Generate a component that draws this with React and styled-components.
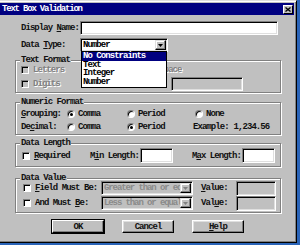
import styled, { createGlobalStyle } from "styled-components";

const GlobalStyle = createGlobalStyle`
  html, body {
    margin: 0;
    padding: 0;
    background: #2a64b8;
  }
  body {
    width: 300px;
    height: 245px;
    overflow: hidden;
  }
  * {
    box-sizing: border-box;
  }
`;

const Window = styled.div`
  width: 300px;
  height: 243px;
  margin-left: -3px;
  padding: 2px;
  background: #c0c0c0;
  border: 1px solid;
  border-color: #dfdfdf #000 #000 #dfdfdf;
  box-shadow: inset 1px 1px 0 #fff, inset -1px -1px 0 #808080;
  font-family: "Liberation Mono", "DejaVu Sans Mono", monospace;
  font-size: 9px;
  font-weight: bold;
  line-height: 10px;
  letter-spacing: -0.95px;
  color: #111;
  display: flex;
  flex-direction: column;
`;

const TitleBar = styled.div`
  height: 12px;
  flex: none;
  background: #000080;
  color: #fff;
  letter-spacing: -1.2px;
  display: flex;
  align-items: center;
  justify-content: space-between;
  padding: 0 1px 0 2px;
`;

const CloseButton = styled.div`
  width: 10px;
  height: 9px;
  background: #c0c0c0;
  border: 1px solid;
  border-color: #fff #000 #000 #fff;
  display: flex;
  align-items: center;
  justify-content: center;
`;

const Body = styled.div`
  display: flex;
  flex-direction: column;
  padding: 6px 13px 0 15px;
`;

const FieldRow = styled.div`
  display: flex;
  align-items: center;
  height: 14px;
  padding-left: 6px;
  margin-top: ${(p) => p.$mt || 0}px;
`;

const FieldLabel = styled.span`
  width: 59px;
  flex: none;
`;

const Sunken = styled.div`
  width: ${(p) => p.$w}px;
  height: ${(p) => p.$h || 14}px;
  flex: none;
  background: ${(p) => (p.$disabled ? "#c0c0c0" : "#fff")};
  border: 1px solid;
  border-color: #808080 #fff #fff #808080;
  box-shadow: inset 1px 1px 0 #000, inset -1px -1px 0 #dfdfdf;
  margin-left: ${(p) => p.$ml || 0}px;
`;

const Select = styled(Sunken)`
  position: relative;
  display: flex;
  align-items: center;
  padding: 2px 1px 2px 2px;
  color: ${(p) => (p.$disabled ? "#8a8a8a" : "#000")};
  white-space: nowrap;
`;

const SelectText = styled.span`
  flex: 1;
  overflow: hidden;
  letter-spacing: ${(p) => (p.$tight ? "-1.1px" : "inherit")};
`;

const ArrowButton = styled.span`
  width: 11px;
  height: 10px;
  flex: none;
  background: #c0c0c0;
  border: 1px solid;
  border-color: #dfdfdf #000 #000 #dfdfdf;
  box-shadow: inset -1px -1px 0 #808080, inset 1px 1px 0 #fff;
  display: flex;
  align-items: center;
  justify-content: center;
`;

const DropList = styled.div`
  position: absolute;
  left: 0;
  top: 100%;
  width: 100%;
  height: 37px;
  background: #fff;
  border: 1px solid #000;
  color: #000;
  z-index: 2;
`;

const DropItem = styled.div`
  height: 8.7px;
  line-height: 8.7px;
  padding-left: 1px;
  background: ${(p) => (p.$active ? "#000080" : "transparent")};
  color: ${(p) => (p.$active ? "#fff" : "#000")};
`;

const Group = styled.div`
  position: relative;
  margin-top: ${(p) => p.$mt}px;
  border: 1px solid #808080;
  box-shadow: 1px 1px 0 #fff, inset 1px 1px 0 #fff;
  padding: ${(p) => p.$pad};
  display: flex;
  flex-direction: column;
  gap: ${(p) => p.$gap || 0}px;
`;

const Legend = styled.span`
  position: absolute;
  top: -6px;
  left: 4px;
  padding: 0 1px;
  background: #c0c0c0;
  line-height: 10px;
`;

const Row = styled.div`
  display: flex;
  align-items: center;
  height: ${(p) => p.$h}px;
`;

const Cell = styled.div`
  display: flex;
  align-items: center;
  width: ${(p) => (p.$w ? `${p.$w}px` : "auto")};
  flex: none;
  gap: ${(p) => (p.$gap === undefined ? 4 : p.$gap)}px;
  margin-left: ${(p) => p.$ml || 0}px;
`;

const Text = styled.span`
  white-space: nowrap;
  color: ${(p) => (p.$disabled ? "#808080" : "inherit")};
  text-shadow: ${(p) => (p.$disabled ? "1px 1px 0 #fff" : "none")};
`;

const Box = styled.span`
  width: 8px;
  height: 8px;
  flex: none;
  background: ${(p) => (p.$disabled ? "#c0c0c0" : "#fff")};
  border: 1px solid;
  border-color: #808080 #fff #fff #808080;
  box-shadow: inset 1px 1px 0 #000;
`;

const Radio = styled.span`
  width: 8px;
  height: 8px;
  flex: none;
  border-radius: 50%;
  background: #fff;
  border: 1px solid;
  border-color: #808080 #fff #fff #808080;
  box-shadow: inset 1px 1px 0 #000;
  display: flex;
  align-items: center;
  justify-content: center;
  &::after {
    content: "";
    width: 3px;
    height: 3px;
    border-radius: 50%;
    background: #000;
    display: ${(p) => (p.$checked ? "block" : "none")};
  }
`;

const ButtonRow = styled.div`
  display: flex;
  gap: 18px;
  margin-top: 7px;
  padding-left: 37px;
`;

const Button = styled.div`
  width: 52px;
  height: 13px;
  background: #c0c0c0;
  border: 1px solid;
  border-color: #fff #000 #000 #fff;
  box-shadow: ${(p) =>
    p.$default
      ? "0 0 0 1px #000, inset -1px -1px 0 #808080"
      : "inset -1px -1px 0 #808080, inset 1px 1px 0 #dfdfdf"};
  display: flex;
  align-items: center;
  justify-content: center;
`;

const U = styled.u`
  text-decoration-thickness: 1px;
  text-underline-offset: 1px;
`;

const Arrow = ({ color = "#000" }) => (
  <svg width="5" height="3" viewBox="0 0 5 3">
    <path d="M0 0h5L2.5 3z" fill={color} />
  </svg>
);

const App = () => {
  return (
    <>
      <GlobalStyle />
      <Window>
        <TitleBar>
          <span>Text Box Validation</span>
          <CloseButton>
            <svg width="6" height="5" viewBox="0 0 6 5">
              <path d="M0.5 0.5l5 4M5.5 0.5l-5 4" stroke="#000" strokeWidth="1.3" />
            </svg>
          </CloseButton>
        </TitleBar>
        <Body>
          <FieldRow>
            <FieldLabel>
              Display <U>N</U>ame:
            </FieldLabel>
            <Sunken $w={198} />
          </FieldRow>
          <FieldRow $mt={3}>
            <FieldLabel>
              Data <U>T</U>ype:
            </FieldLabel>
            <Select $w={88}>
              <SelectText>Number</SelectText>
              <ArrowButton>
                <Arrow />
              </ArrowButton>
              <DropList>
                <DropItem $active>No Constraints</DropItem>
                <DropItem>Text</DropItem>
                <DropItem>Integer</DropItem>
                <DropItem>Number</DropItem>
              </DropList>
            </Select>
          </FieldRow>

          <Group $mt={8} $pad="4px 0 1px 5px" $gap={2}>
            <Legend>Text Format</Legend>
            <Row $h={10}>
              <Cell $w={104}>
                <Box $disabled />
                <Text $disabled>Letters</Text>
              </Cell>
              <Cell>
                <Box $disabled />
                <Text $disabled>Whitespace</Text>
              </Cell>
            </Row>
            <Row $h={14}>
              <Cell $w={104}>
                <Box $disabled />
                <Text $disabled>Digits</Text>
              </Cell>
              <Cell>
                <Box $disabled />
                <Text $disabled>Other:</Text>
              </Cell>
              <Sunken $w={72} $ml={7} $disabled />
            </Row>
          </Group>

          <Group $mt={9} $pad="6px 0 2px 5px" $gap={3}>
            <Legend>Numeric Format</Legend>
            <Row $h={10}>
              <Cell $w={46}>
                <Text>
                  <U>G</U>rouping:
                </Text>
              </Cell>
              <Cell $w={60} $gap={3}>
                <Radio $checked />
                <Text>Comma</Text>
              </Cell>
              <Cell $w={68} $gap={3}>
                <Radio />
                <Text>Period</Text>
              </Cell>
              <Cell $gap={3}>
                <Radio />
                <Text>None</Text>
              </Cell>
            </Row>
            <Row $h={10}>
              <Cell $w={46}>
                <Text>
                  De<U>c</U>imal:
                </Text>
              </Cell>
              <Cell $w={60} $gap={3}>
                <Radio />
                <Text>Comma</Text>
              </Cell>
              <Cell $w={66} $gap={3}>
                <Radio $checked />
                <Text>Period</Text>
              </Cell>
              <Cell $gap={5}>
                <Text>Example:</Text>
                <Text>1,234.56</Text>
              </Cell>
            </Row>
          </Group>

          <Group $mt={8} $pad="4px 0 3px 6px">
            <Legend>Data Length</Legend>
            <Row $h={15}>
              <Cell $w={68}>
                <Box />
                <Text>
                  <U>R</U>equired
                </Text>
              </Cell>
              <Cell $w={50}>
                <Text>
                  M<U>i</U>n Length:
                </Text>
              </Cell>
              <Sunken $w={33} $h={15} />
              <Cell $w={50} $ml={19}>
                <Text>
                  M<U>a</U>x Length:
                </Text>
              </Cell>
              <Sunken $w={33} $h={15} />
            </Row>
          </Group>

          <Group $mt={11} $pad="2px 0 2px 7px" $gap={1}>
            <Legend>Data Value</Legend>
            <Row $h={14}>
              <Cell $w={78}>
                <Box />
                <Text>
                  <U>F</U>ield Must Be:
                </Text>
              </Cell>
              <Select $w={92} $disabled>
                <SelectText $tight>Greater than or eq</SelectText>
                <ArrowButton>
                  <Arrow color="#808080" />
                </ArrowButton>
              </Select>
              <Cell $w={35} $ml={8}>
                <Text>
                  <U>V</U>alue:
                </Text>
              </Cell>
              <Sunken $w={40} $h={15} $disabled />
            </Row>
            <Row $h={14}>
              <Cell $w={78}>
                <Box />
                <Text>
                  And Must <U>B</U>e:
                </Text>
              </Cell>
              <Select $w={92} $disabled>
                <SelectText $tight>Less than or equal</SelectText>
                <ArrowButton>
                  <Arrow color="#808080" />
                </ArrowButton>
              </Select>
              <Cell $w={35} $ml={8}>
                <Text>
                  Val<U>u</U>e:
                </Text>
              </Cell>
              <Sunken $w={40} $h={15} $disabled />
            </Row>
          </Group>

          <ButtonRow>
            <Button $default>OK</Button>
            <Button>Cancel</Button>
            <Button>
              <span>
                <U>H</U>elp
              </span>
            </Button>
          </ButtonRow>
        </Body>
      </Window>
    </>
  );
};

export default App;
